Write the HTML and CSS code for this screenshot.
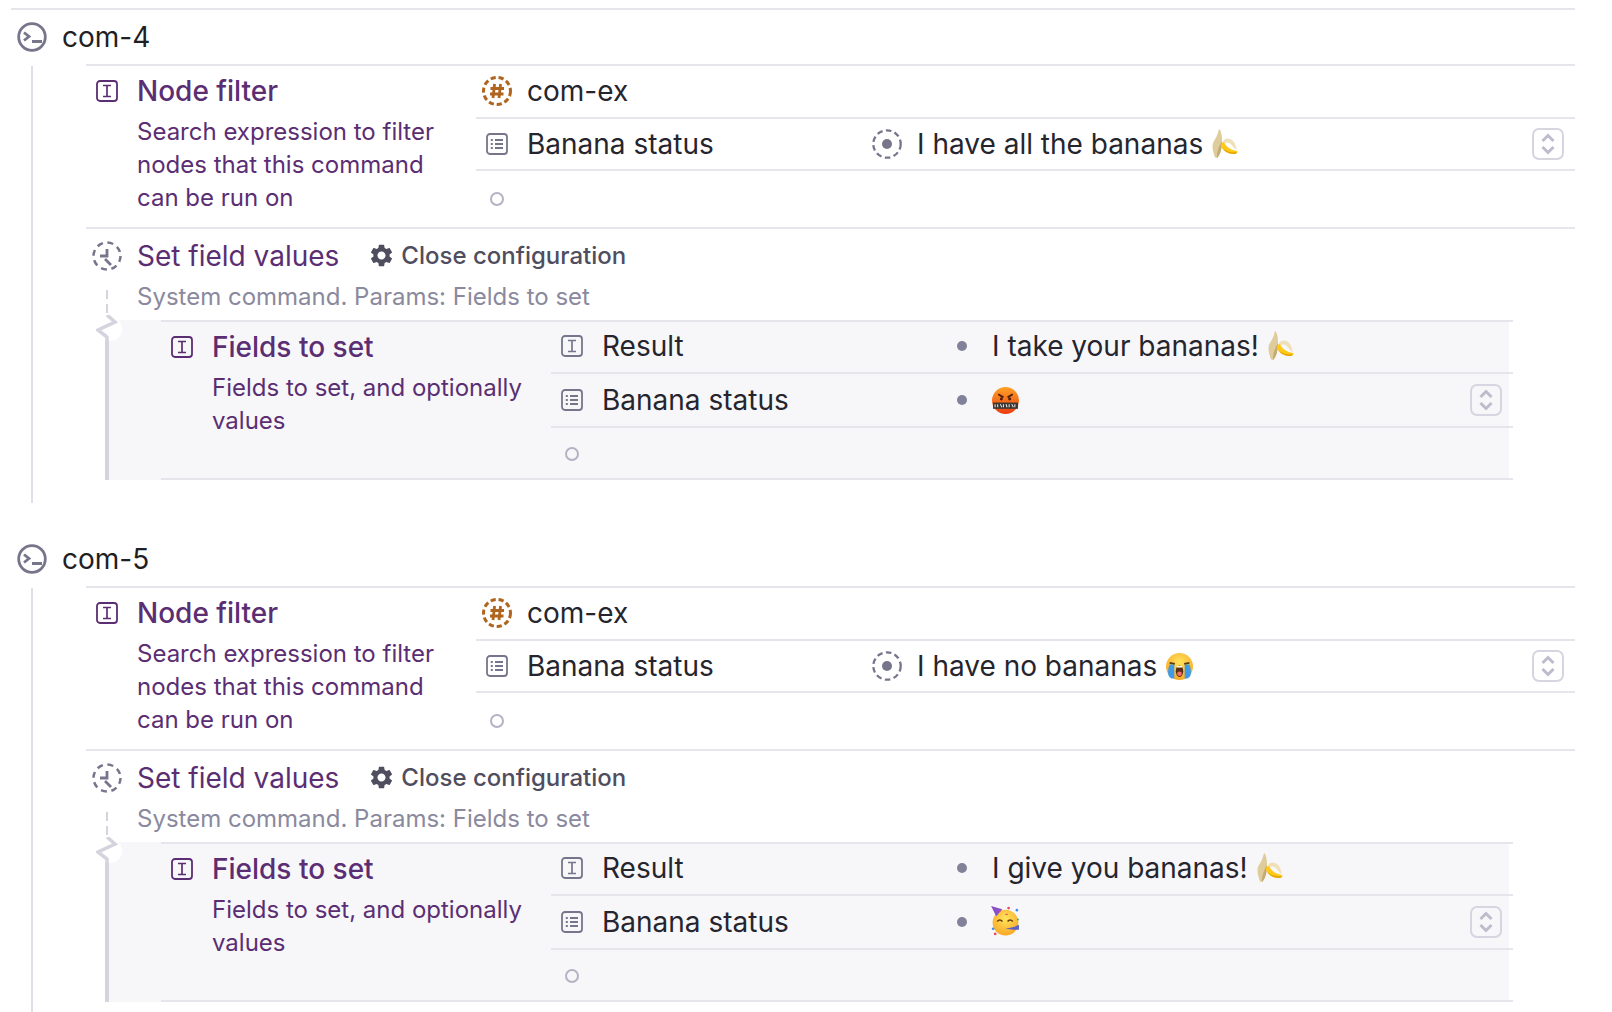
FILE: index.html
```html
<!DOCTYPE html>
<html lang="en">
<head>
<meta charset="utf-8">
<title>Commands</title>
<link rel="stylesheet" href="styles.css">
</head>
<body>
<svg class="defs" width="0" height="0" aria-hidden="true">
  <defs>
    <radialGradient id="faceY" cx="50%" cy="35%" r="65%"><stop offset="0" stop-color="#ffe45c"/><stop offset="1" stop-color="#f9a825"/></radialGradient>
    <linearGradient id="faceR" x1="0" y1="0" x2="0" y2="1"><stop offset="0" stop-color="#ffa227"/><stop offset="1" stop-color="#ec3b12"/></linearGradient>
    <symbol id="i-term" viewBox="0 0 30 30"><circle cx="15" cy="15" r="13.300" fill="none" stroke="currentColor" stroke-width="2.800"/><path d="M7 10.500l5 4-5 4" fill="none" stroke="currentColor" stroke-width="2.800"/><path d="M15 19.500h10" fill="none" stroke="currentColor" stroke-width="3"/></symbol>
    <symbol id="i-text" viewBox="0 0 22 22"><rect x="1" y="1" width="20" height="20" rx="3" fill="none" stroke="currentColor" stroke-width="1.800"/><path d="M7 5.500h8M7 16.500h8M11 5.500v11" fill="none" stroke="currentColor" stroke-width="1.700"/></symbol>
    <symbol id="i-list" viewBox="0 0 22 22"><rect x="1" y="1" width="20" height="20" rx="3" fill="none" stroke="currentColor" stroke-width="1.800"/><path d="M9 7h8M9 11h8M9 15h8M4.800 7h2M4.800 11h2M4.800 15h2" fill="none" stroke="currentColor" stroke-width="1.800"/></symbol>
    <symbol id="i-hash" viewBox="0 0 30 30"><circle cx="15" cy="15" r="13.500" fill="none" stroke="currentColor" stroke-width="3" stroke-dasharray="5.200 2.900"/><path d="M12.600 8l-1.600 14M18.600 8l-1.600 14M8.500 12.500h13.500M8 18h13.500" fill="none" stroke="currentColor" stroke-width="2.800"/></symbol>
    <symbol id="i-radio" viewBox="0 0 30 30"><circle cx="15" cy="15" r="13.700" fill="none" stroke="currentColor" stroke-width="2.300" stroke-dasharray="5.600 3.400"/><circle cx="15" cy="15" r="5" fill="currentColor"/></symbol>
    <symbol id="i-sys" viewBox="0 0 30 30"><circle cx="15" cy="15" r="13.500" fill="none" stroke="currentColor" stroke-width="2.500" stroke-dasharray="6 4.600"/><path d="M15 8v7H8M13 18l6 6" fill="none" stroke="currentColor" stroke-width="2.800"/></symbol>
    <symbol id="i-gear" viewBox="0 0 24 24"><path fill="currentColor" d="M19.140 12.940c.04-.3.06-.61.06-.94 0-.32-.02-.64-.07-.94l2.030-1.580a.49.49 0 0 0 .12-.61l-1.920-3.320a.488.488 0 0 0-.59-.22l-2.390.96c-.5-.38-1.030-.7-1.620-.94l-.36-2.540a.484.484 0 0 0-.48-.41h-3.840c-.24 0-.43.17-.47.41l-.36 2.540c-.59.24-1.130.57-1.620.94l-2.390-.96c-.22-.08-.47 0-.59.22L2.740 8.870c-.12.21-.08.47.12.61l2.030 1.580c-.05.3-.09.63-.09.94s.02.64.07.94l-2.030 1.580a.49.49 0 0 0-.12.61l1.920 3.320c.12.22.37.29.59.22l2.390-.96c.5.38 1.030.7 1.620.94l.36 2.540c.05.24.24.41.48.41h3.840c.24 0 .44-.17.47-.41l.36-2.540c.59-.24 1.130-.56 1.620-.94l2.390.96c.22.08.47 0 .59-.22l1.920-3.320c.12-.22.07-.47-.12-.61l-2.010-1.580zM12 15.600c-1.980 0-3.600-1.620-3.600-3.600s1.620-3.600 3.600-3.600 3.600 1.620 3.600 3.600-1.620 3.600-3.600 3.600z"/></symbol>
    <symbol id="i-step" viewBox="0 0 32 32"><rect x="1" y="1" width="30" height="30" rx="6" fill="none" stroke="#d6d5e0" stroke-width="2"/><path d="M10.500 13L16 7.500l5.500 5.500M10.500 19L16 24.500l5.500-5.500" fill="none" stroke="#bdbccd" stroke-width="3"/></symbol>
    <symbol id="e-banana" viewBox="0 0 26 30"><path fill="#dfcc9c" d="M7 0c2 1 3 6 3 12 0 8-2 14-5 17-2 0-3-2-3-4-2-5-2-10 0-13 2-3 4-7 5-12z"/><path fill="#c4a970" d="M10 12c0 8-2 14-5 17-.5-5 2-12 5-17z"/><path fill="#efe0b8" d="M11 12c3-4 8-3 11 1 2 3 2 6 3 8l-3-2c-3-5-7-7-10-4z"/><path fill="#ffc917" d="M12 13c2 5 7 8 13 9 1 1 0 3-3 3-6 0-11-3-13-8 0-3 1-4 3-4z"/><path fill="#e5a400" d="M9.500 18c3 4 9 6 15.500 5-1 2-2 2-3 2-6 0-10-3-12.500-7z"/></symbol>
    <symbol id="e-swear" viewBox="0 0 26 26"><circle cx="13" cy="13" r="13" fill="url(#faceR)"/><path d="M6 7l5 3M20 7l-5 3" stroke="#4b2008" stroke-width="1.800" fill="none"/><circle cx="9" cy="11.500" r="1.400" fill="#4b2008"/><circle cx="17" cy="11.500" r="1.400" fill="#4b2008"/><rect x="1" y="15" width="24" height="6" fill="#3a3634"/><path d="M3 16.500v3M5.500 16.500v3M8 16.500l1.500 3M11 16.500v3M13.500 16.500l1 3M16.500 16.500v3M19 16.500l1.500 3M22 16.500v3" stroke="#e8e8e8" stroke-width="1"/></symbol>
    <symbol id="e-cry" viewBox="0 0 26 26"><circle cx="13" cy="13" r="13" fill="url(#faceY)"/><path d="M2.500 22c-1-3-.5-8 1-11h4.500v13.500c-2 .5-4 0-5.500-2.500zM23.500 22c1-3 .5-8-1-11H18v13.500c2 .5 4 0 5.500-2.500z" fill="#3f9be8"/><path d="M3.500 9.500l5 1M22.500 9.500l-5 1" stroke="#5b3a10" stroke-width="1.600" fill="none"/><ellipse cx="13" cy="17.500" rx="3.600" ry="5.500" fill="#5b2c10"/><ellipse cx="13" cy="20" rx="2.300" ry="2.200" fill="#f0706a"/><rect x="10.500" y="12.500" width="5" height="1.500" fill="#fff"/></symbol>
    <symbol id="e-party" viewBox="0 0 30 30"><circle cx="15" cy="17" r="12.500" fill="url(#faceY)"/><path d="M1 1l11 3-6 7z" fill="#8a4fc6"/><path d="M7 16c1.500-2 3.500-2 5 0M17 16c1.500-2 3.500-2 5 0" stroke="#6b3d10" stroke-width="1.500" fill="none"/><path d="M15 23l9-2 4-2v5l-5 0z" fill="#5b5fc7"/><circle cx="18" cy="3" r="1.300" fill="#e84a5f"/><circle cx="26" cy="5" r="1.300" fill="#3f8ee8"/><circle cx="3" cy="23" r="1.300" fill="#3f8ee8"/><circle cx="5" cy="28" r="1.300" fill="#e84a5f"/><circle cx="27" cy="14" r="1" fill="#45b26b"/><path d="M9 6h1.500M15 9h2" stroke="#e84a5f" stroke-width="1.200"/></symbol>
  </defs>
</svg>

<section class="command">
  <header class="command-head">
    <svg class="ic-term"><use href="#i-term"/></svg>
    <span class="command-name">com-4</span>
  </header>
  <div class="command-body">
    <div class="param param-top">
      <div class="param-label">
        <svg class="ic ic-purple"><use href="#i-text"/></svg>
        <div class="param-text">
          <div class="param-title">Node filter</div>
          <div class="param-desc">Search expression to filter nodes that this command can be run on</div>
        </div>
      </div>
      <div class="values">
        <div class="row row-a">
          <svg class="ic-lg ic-orange"><use href="#i-hash"/></svg>
          <span class="row-text">com-ex</span>
        </div>
        <div class="row row-b">
          <svg class="ic ic-grey"><use href="#i-list"/></svg>
          <span class="row-name">Banana status</span>
          <svg class="ic-lg ic-grey"><use href="#i-radio"/></svg>
          <span class="row-value">I have all the bananas</span>
          <svg class="emoji-banana"><use href="#e-banana"/></svg>
          <svg class="stepper"><use href="#i-step"/></svg>
        </div>
        <div class="row row-c"><span class="ring"></span></div>
      </div>
    </div>
    <div class="system">
      <div class="system-head">
        <svg class="ic-lg ic-grey"><use href="#i-sys"/></svg>
        <span class="system-title">Set field values</span>
        <span class="close-config"><svg class="ic-gear"><use href="#i-gear"/></svg>Close configuration</span>
      </div>
      <div class="system-desc">System command. Params: Fields to set</div>
      <div class="nested">
        <span class="connector"></span>
        <svg class="zig" viewBox="0 0 28 28"><circle cx="14" cy="14" r="12" fill="#fff"/><path d="M11 0l8 7-17 8 9 7v6" fill="none" stroke="#d4d3de" stroke-width="3.500"/></svg>
        <div class="param nested-param">
          <div class="param-label">
            <svg class="ic ic-purple"><use href="#i-text"/></svg>
            <div class="param-text">
              <div class="param-title">Fields to set</div>
              <div class="param-desc">Fields to set, and optionally values</div>
            </div>
          </div>
          <div class="values">
            <div class="row row-n1">
              <svg class="ic ic-grey"><use href="#i-text"/></svg>
              <span class="row-name">Result</span>
              <span class="dot"></span>
              <span class="row-value">I take your bananas!</span>
              <svg class="emoji-banana"><use href="#e-banana"/></svg>
            </div>
            <div class="row row-n2">
              <svg class="ic ic-grey"><use href="#i-list"/></svg>
              <span class="row-name">Banana status</span>
              <span class="dot"></span>
              <svg class="emoji-face"><use href="#e-swear"/></svg>
              <svg class="stepper"><use href="#i-step"/></svg>
            </div>
            <div class="row row-n3"><span class="ring"></span></div>
          </div>
        </div>
      </div>
    </div>
  </div>
</section>

<section class="command">
  <header class="command-head">
    <svg class="ic-term"><use href="#i-term"/></svg>
    <span class="command-name">com-5</span>
  </header>
  <div class="command-body">
    <div class="param param-top">
      <div class="param-label">
        <svg class="ic ic-purple"><use href="#i-text"/></svg>
        <div class="param-text">
          <div class="param-title">Node filter</div>
          <div class="param-desc">Search expression to filter nodes that this command can be run on</div>
        </div>
      </div>
      <div class="values">
        <div class="row row-a">
          <svg class="ic-lg ic-orange"><use href="#i-hash"/></svg>
          <span class="row-text">com-ex</span>
        </div>
        <div class="row row-b">
          <svg class="ic ic-grey"><use href="#i-list"/></svg>
          <span class="row-name">Banana status</span>
          <svg class="ic-lg ic-grey"><use href="#i-radio"/></svg>
          <span class="row-value">I have no bananas</span>
          <svg class="emoji-face"><use href="#e-cry"/></svg>
          <svg class="stepper"><use href="#i-step"/></svg>
        </div>
        <div class="row row-c"><span class="ring"></span></div>
      </div>
    </div>
    <div class="system">
      <div class="system-head">
        <svg class="ic-lg ic-grey"><use href="#i-sys"/></svg>
        <span class="system-title">Set field values</span>
        <span class="close-config"><svg class="ic-gear"><use href="#i-gear"/></svg>Close configuration</span>
      </div>
      <div class="system-desc">System command. Params: Fields to set</div>
      <div class="nested">
        <span class="connector"></span>
        <svg class="zig" viewBox="0 0 28 28"><circle cx="14" cy="14" r="12" fill="#fff"/><path d="M11 0l8 7-17 8 9 7v6" fill="none" stroke="#d4d3de" stroke-width="3.500"/></svg>
        <div class="param nested-param">
          <div class="param-label">
            <svg class="ic ic-purple"><use href="#i-text"/></svg>
            <div class="param-text">
              <div class="param-title">Fields to set</div>
              <div class="param-desc">Fields to set, and optionally values</div>
            </div>
          </div>
          <div class="values">
            <div class="row row-n1">
              <svg class="ic ic-grey"><use href="#i-text"/></svg>
              <span class="row-name">Result</span>
              <span class="dot"></span>
              <span class="row-value">I give you bananas!</span>
              <svg class="emoji-banana"><use href="#e-banana"/></svg>
            </div>
            <div class="row row-n2">
              <svg class="ic ic-grey"><use href="#i-list"/></svg>
              <span class="row-name">Banana status</span>
              <span class="dot"></span>
              <svg class="emoji-party"><use href="#e-party"/></svg>
              <svg class="stepper"><use href="#i-step"/></svg>
            </div>
            <div class="row row-n3"><span class="ring"></span></div>
          </div>
        </div>
      </div>
    </div>
  </div>
</section>
</body>
</html>
```
FILE: styles.css
```css
* { box-sizing: border-box; }
html, body { margin: 0; height: 100%; }
body {
  padding: 8px 37px 0 11px;
  width: 1612px;
  height: 1012px;
  overflow: hidden;
  background: #fff;
  font-family: Inter, "Noto Sans", sans-serif;
  font-size: 28px;
  color: #26252e;
}
.defs { position: absolute; }

.command { margin-bottom: 27px; }
.command-head {
  display: flex;
  align-items: center;
  height: 58px;
  border-top: 2px solid #e6e5ec;
  padding: 0 0 2px 6px;
}
.command + .command .command-head { border-top-color: transparent; }
.ic-term { width: 30px; height: 30px; color: #76758b; margin-right: 15px; flex: none; }
.command-name { font-size: 28px; color: #1f1f24; }

.command-body {
  display: flow-root;
  margin-left: 20px;
  border-left: 2px solid #e0dfe7;
  padding-left: 53px;
  height: 437px;
}

.param { display: grid; }
.param-top {
  grid-template-columns: 390px 1fr;
  border-top: 2px solid #e6e5ec;
  margin-top: -2px;
}
.param-label { display: flex; padding: 0 0 0 10px; }
.param-label .ic { margin-top: 14px; margin-right: 19px; }
.param-title { font-size: 28px; font-weight: 500; color: #5b2e73; line-height: 50px; margin-bottom: -1px; }
.param-desc { font-size: 24px; line-height: 33px; color: #5b2e73; width: 318px; }

.ic { width: 22px; height: 22px; flex: none; }
.ic-lg { width: 30px; height: 30px; flex: none; }
.ic-purple { color: #5b2e73; }
.ic-grey { color: #76758b; }
.ic-orange { color: #b0651f; }

.values { min-width: 0; }
.row {
  display: flex;
  align-items: center;
  border-bottom: 2px solid #e6e5ec;
  padding-left: 10px;
}
.row:last-child { border-bottom: 0; }
.row-a { height: 53px; padding: 0 0 2px 6px; }
.row-b { height: 52px; }
.row-c { height: 56px; padding-left: 14px; }
.row .ic { margin-right: 19px; }
.row .ic-lg { margin-right: 15px; }
.row-name { width: 345px; flex: none; }
.row-value { margin-right: 9px; }
.dot {
  width: 10px;
  height: 10px;
  border-radius: 50%;
  background: #82819a;
  flex: none;
  margin-left: 10px;
  margin-right: 25px;
}
.ring {
  width: 14px;
  height: 14px;
  border-radius: 50%;
  border: 2px solid #b4b3c4;
  flex: none;
}
.stepper { width: 32px; height: 32px; margin-left: auto; margin-right: 11px; flex: none; }
.emoji-banana { width: 26px; height: 30px; flex: none; }
.emoji-face { width: 27px; height: 27px; flex: none; }
.emoji-party { width: 31px; height: 31px; flex: none; margin-top: -4px; margin-left: -2px; }

.system { border-top: 2px solid #e6e5ec; }
.system-head {
  display: flex;
  align-items: center;
  height: 53px;
  padding-left: 6px;
}
.system-head .ic-lg { margin-right: 15px; }
.system-title { font-size: 28px; color: #5b2e73; margin-right: 29px; }
.close-config {
  display: flex;
  align-items: center;
  font-size: 24px;
  font-weight: 500;
  color: #4f4e5e;
}
.ic-gear { width: 27px; height: 27px; margin-right: 6px; flex: none; }
.system-desc { font-size: 24px; line-height: 30px; color: #8a899e; padding-left: 51px; height: 38px; }

.nested {
  position: relative;
  margin-left: 19px;
  margin-right: 66px;
  border-left: 4px solid #d4d3de;
  background: #f7f7fa;
  height: 160px;
}
.connector {
  position: absolute;
  left: -3px;
  top: -30px;
  width: 2px;
  height: 26px;
  background: repeating-linear-gradient(to bottom, #d4d3de 0 9px, transparent 9px 14px);
}
.zig { position: absolute; left: -13px; top: -5px; width: 28px; height: 28px; }
.nested-param {
  grid-template-columns: 390px 1fr;
  margin-left: 52px;
  margin-right: -4px;
  height: 160px;
  border-top: 2px solid #e6e5ec;
  border-bottom: 2px solid #e6e5ec;
}
.row-n1 { height: 52px; padding-bottom: 2px; }
.row-n2 { height: 54px; }
.row-n3 { height: 50px; padding: 2px 0 0 14px; }
```
